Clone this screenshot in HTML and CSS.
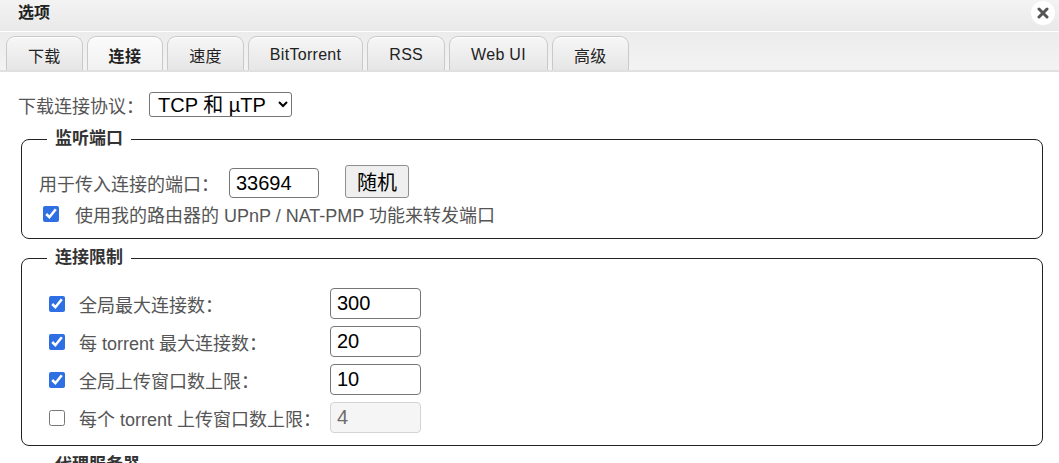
FILE: index.html
```html
<!DOCTYPE html>
<html lang="zh-CN">
<head>
<meta charset="utf-8">
<title>选项</title>
<link rel="stylesheet" href="styles.css">
</head>
<body>
<div class="window">
  <div class="titlebar">
    <span class="title">选项</span>
    <span class="close"><svg width="12" height="12" viewBox="0 0 12 12"><path d="M2 2 L10 10 M10 2 L2 10" stroke="#555" stroke-width="3" stroke-linecap="round"/></svg></span>
  </div>
  <div class="tabbar">
    <div class="tab">下载</div>
    <div class="tab active">连接</div>
    <div class="tab">速度</div>
    <div class="tab">BitTorrent</div>
    <div class="tab">RSS</div>
    <div class="tab">Web UI</div>
    <div class="tab">高级</div>
  </div>
  <div class="content">
    <div class="proto-row">
      <label class="lbl">下载连接协议：</label>
      <select class="select"><option>TCP 和 µTP</option></select>
    </div>

    <fieldset class="group g1">
      <legend>监听端口</legend>
      <div class="port-row">
        <label class="lbl port-lbl">用于传入连接的端口：</label>
        <input class="field port" type="text" value="33694">
        <button class="btn">随机</button>
      </div>
      <div class="check-row">
        <input type="checkbox" class="cb" checked>
        <label class="lbl">使用我的路由器的 UPnP / NAT-PMP 功能来转发端口</label>
      </div>
    </fieldset>

    <fieldset class="group g2">
      <legend>连接限制</legend>
      <div class="limits">
        <input type="checkbox" class="cb" checked>
        <label class="lbl">全局最大连接数：</label>
        <input class="field num" type="text" value="300">

        <input type="checkbox" class="cb" checked>
        <label class="lbl">每 torrent 最大连接数：</label>
        <input class="field num" type="text" value="20">

        <input type="checkbox" class="cb" checked>
        <label class="lbl">全局上传窗口数上限：</label>
        <input class="field num" type="text" value="10">

        <input type="checkbox" class="cb">
        <label class="lbl">每个 torrent 上传窗口数上限：</label>
        <input class="field num" type="text" value="4" disabled>
      </div>
    </fieldset>

    <fieldset class="group g3">
      <legend>代理服务器</legend>
      <div class="spacer"></div>
    </fieldset>
  </div>
</div>
</body>
</html>
```

FILE: styles.css
```css
html, body {
  margin: 0;
  padding: 0;
  height: 463px;
  overflow: hidden;
  background: #ffffff;
  font-family: "Liberation Sans", Arial, "Noto Sans CJK SC", sans-serif;
}

.window {
  width: 1059px;
}

.titlebar {
  height: 32px;
  display: flex;
  align-items: flex-start;
  justify-content: space-between;
  padding: 3px 4px 0 18px;
  box-sizing: border-box;
  background: linear-gradient(#f3f3f3, #e9e9e9);
  border-bottom: 1px solid #ffffff;
}

.title {
  font-size: 16px;
  line-height: 20px;
  font-weight: bold;
  color: #222;
}

.close {
  width: 24px;
  height: 24px;
  border-radius: 50%;
  background: #ffffff;
  display: flex;
  align-items: center;
  justify-content: center;
  margin-top: -2px;
}

.tabbar {
  height: 40px;
  display: flex;
  align-items: flex-end;
  gap: 4px;
  padding-left: 6px;
  box-sizing: border-box;
  background: linear-gradient(#ececec, #f3f3f3);
  border-bottom: 2px solid #e0e0e0;
}

.tab {
  height: 34px;
  box-sizing: border-box;
  padding: 2px 21px 0;
  display: flex;
  align-items: center;
  justify-content: center;
  font-size: 16px;
  letter-spacing: 0.3px;
  color: #222;
  border: 1px solid #c9c9c9;
  border-bottom: none;
  border-radius: 9px 9px 0 0;
  background: linear-gradient(#f6f6f6, #e6e6e6);
  box-shadow: inset 0 1px 0 #ffffff;
}

.tab.active {
  font-weight: bold;
  background: linear-gradient(#fbfbfb, #f1f1f1);
}

.content {
  padding: 20px 16px 0 18px;
}

.lbl {
  font-size: 18px;
  color: #555;
}

.proto-row {
  display: flex;
  align-items: center;
  gap: 5px;
  height: 25px;
}

.select {
  height: 25px;
  width: 143px;
  font-family: inherit;
  font-size: 20px;
  color: #000;
  border: 1px solid #767676;
  border-radius: 3px;
  background: #fff;
  padding: 0 0 0 4px;
  line-height: 1;
}

.group {
  margin: 12px 0 0 3px;
  padding: 16px 16px 13px 17px;
  border: 1px solid #222;
  border-radius: 8px;
}

.group legend {
  font-size: 17px;
  font-weight: bold;
  color: #333;
  padding: 0 8px;
  margin-left: 8px;
  line-height: 20px;
}

.port-row {
  display: flex;
  align-items: flex-end;
  height: 33px;
}

.port-lbl {
  width: 190px;
  align-self: center;
  margin-top: 2px;
}

.field {
  box-sizing: border-box;
  height: 30px;
  font-family: inherit;
  font-size: 20px;
  color: #000;
  border: 1px solid #767676;
  border-radius: 4px;
  padding: 0 6px;
  background: #fff;
}

.field:disabled {
  background: #f5f5f5;
  border-color: #d4d4d4;
  color: #6d6d6d;
}

.port {
  width: 90px;
}

.btn {
  margin-left: 26px;
  height: 33px;
  width: 64px;
  box-sizing: border-box;
  font-family: inherit;
  font-size: 20px;
  color: #000;
  border: 1px solid #8f8f8f;
  border-radius: 3px;
  background: #efefef;
  padding: 0;
}

.check-row {
  display: flex;
  align-items: center;
  height: 22px;
  margin-top: 5px;
}

.cb {
  width: 16px;
  height: 16px;
  margin: 0 16px 0 4px;
  accent-color: #2f6fe4;
}

.g2 {
  margin-top: 9px;
  padding: 20px 16px 12px 17px;
}

.limits {
  display: grid;
  grid-template-columns: 34px 251px 91px;
  row-gap: 7px;
  align-items: center;
  padding-left: 6px;
}

.limits .cb {
  margin: 0 0 0 4px;
}

.num {
  height: 31px;
  width: 91px;
}

.g3 {
  margin-top: 9px;
}

.spacer {
  height: 60px;
}
```
